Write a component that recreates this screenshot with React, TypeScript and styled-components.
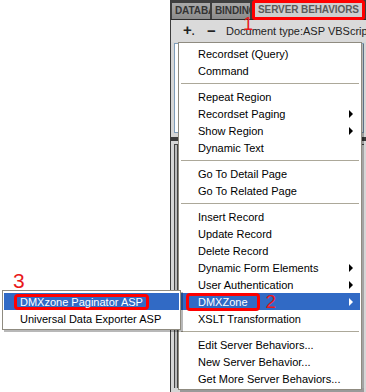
import styled, { createGlobalStyle } from "styled-components";

const GlobalStyle = createGlobalStyle`
  html, body { margin: 0; padding: 0; background: #fff; }
  body { font-family: "Liberation Sans", Arial, sans-serif; font-size: 11px; }
`;

type Item = { label: string; sub?: boolean; sep?: boolean; active?: boolean };

const items: Item[] = [
  { label: "Recordset (Query)" },
  { label: "Command" },
  { label: "", sep: true },
  { label: "Repeat Region" },
  { label: "Recordset Paging", sub: true },
  { label: "Show Region", sub: true },
  { label: "Dynamic Text" },
  { label: "", sep: true },
  { label: "Go To Detail Page" },
  { label: "Go To Related Page" },
  { label: "", sep: true },
  { label: "Insert Record" },
  { label: "Update Record" },
  { label: "Delete Record" },
  { label: "Dynamic Form Elements", sub: true },
  { label: "User Authentication", sub: true },
  { label: "DMXZone", sub: true, active: true },
  { label: "XSLT Transformation" },
  { label: "", sep: true },
  { label: "Edit Server Behaviors..." },
  { label: "New Server Behavior..." },
  { label: "Get More Server Behaviors..." },
];

const App = () => (
  <>
    <GlobalStyle />
    <Stage>
      <Blank />
      <Panel>
        <TabBar>
          <Tab $width={38}>DATABASES</Tab>
          <Tab $width={38}>BINDINGS</Tab>
          <Tab $width={113} $current>
            SERVER BEHAVIORS
          </Tab>
        </TabBar>
        <Toolbar>
          <ToolIcon $width={24}>
            +<small>.</small>
          </ToolIcon>
          <ToolIcon $width={19}>−</ToolIcon>
          <DocType>Document type:ASP VBScript</DocType>
        </Toolbar>
        <Body>
          <ListBox />
          <Divider />
          <Props>
            <PropField />
          </Props>
        </Body>
      </Panel>

      <Note $left={243} $top={15} $size={18}>
        1
      </Note>

      <Menu>
        {items.map((it, i) =>
          it.sep ? (
            <Separator key={i} />
          ) : (
            <Row key={i} $active={it.active}>
              {it.active ? (
                <>
                  <Mark>{it.label}</Mark>
                  <InlineNote>2</InlineNote>
                </>
              ) : (
                <span>{it.label}</span>
              )}
              {it.sub && <Arrow $active={it.active} />}
            </Row>
          )
        )}
      </Menu>

      <SubMenu>
        <Note $left={10} $top={-21} $size={21}>
          3
        </Note>
        <SubRow $active>
          <SubMark>DMXzone Paginator ASP</SubMark>
        </SubRow>
        <SubRow>Universal Data Exporter ASP</SubRow>
      </SubMenu>
    </Stage>
  </>
);

export default App;

const Stage = styled.div`
  position: relative;
  width: 366px;
  height: 392px;
  overflow: hidden;
  display: flex;
  background: #fff;
`;

const Blank = styled.div`
  width: 170px;
  flex: none;
`;

const Panel = styled.div`
  flex: 1;
  display: flex;
  flex-direction: column;
  min-width: 0;
  background: #d6d6d6;
  border-left: 1px solid #3c3c3c;
`;

const TabBar = styled.div`
  height: 19px;
  flex: none;
  display: flex;
  align-items: flex-end;
  gap: 2px;
  padding-left: 1px;
  background: #3e3e3e;
  border-bottom: 1px solid #2a2a2a;
`;

const Tab = styled.div<{ $width: number; $current?: boolean }>`
  width: ${(p) => p.$width}px;
  height: 16px;
  flex: none;
  box-sizing: border-box;
  overflow: hidden;
  white-space: nowrap;
  padding-left: 3px;
  font-weight: bold;
  font-size: 10px;
  letter-spacing: -0.1px;
  line-height: 16px;
  color: ${(p) => (p.$current ? "#5a5a5a" : "#333")};
  background: ${(p) =>
    p.$current ? "#cfcfcf" : "linear-gradient(#a9a9a9, #8a8a8a)"};
  ${(p) =>
    p.$current &&
    `
    height: 20px;
    line-height: 14px;
    border: 3px solid #f00;
    border-radius: 3px;
    margin-bottom: -1px;
  `}
`;

const Toolbar = styled.div`
  height: 22px;
  flex: none;
  display: flex;
  align-items: center;
  padding-left: 12px;
  background: #dadada;
`;

const ToolIcon = styled.span<{ $width: number }>`
  width: ${(p) => p.$width}px;
  flex: none;
  font-weight: bold;
  font-size: 15px;
  color: #222;
  line-height: 14px;
  small {
    font-size: 10px;
  }
`;

const DocType = styled.span`
  white-space: nowrap;
  color: #222;
`;

const Body = styled.div`
  flex: 1;
  display: flex;
  flex-direction: column;
  padding: 1px 2px 0 2px;
`;

const ListBox = styled.div`
  height: 88px;
  margin-left: 1px;
  background: #fff;
  border: 1px solid #7f9db9;
`;

const Divider = styled.div`
  height: 4px;
  margin: 4px -2px 2px -2px;
  background: #3a3a3a;
`;

const Props = styled.div`
  flex: 1;
  display: flex;
  padding: 1px 0 4px 1px;
`;

const PropField = styled.div`
  flex: 1;
  border-left: 1px solid #444;
  border-top: 1px solid #444;
  box-shadow: inset 2px 0 0 #bbb, inset 3px 0 0 #444;
  background: #e4e4e4;
`;

const Note = styled.div<{ $left: number; $top: number; $size: number }>`
  position: absolute;
  left: ${(p) => p.$left}px;
  top: ${(p) => p.$top}px;
  font-size: ${(p) => p.$size}px;
  line-height: 1;
  color: #e8191b;
`;

const Menu = styled.div`
  position: absolute;
  left: 178px;
  top: 42px;
  width: 184px;
  box-sizing: border-box;
  padding: 2px 1px;
  background: #fff;
  border: 1px solid #8f8b80;
  box-shadow: 2px 2px 0 rgba(0, 0, 0, 0.28);
`;

const Row = styled.div<{ $active?: boolean }>`
  height: 17px;
  display: flex;
  align-items: center;
  padding: 0 7px 0 18px;
  white-space: nowrap;
  color: ${(p) => (p.$active ? "#fff" : "#000")};
  background: ${(p) => (p.$active ? "#316ac5" : "transparent")};
  span:first-child {
    flex: 1;
  }
`;

const Mark = styled.span`
  flex: none !important;
  height: 18px;
  box-sizing: border-box;
  margin-left: -12px;
  padding: 0 9px;
  line-height: 12px;
  border: 3px solid #f00;
  border-radius: 4px;
`;

const InlineNote = styled.span`
  flex: 1;
  margin-left: 6px;
  font-size: 19px;
  line-height: 17px;
  color: #e8191b;
`;

const Arrow = styled.i<{ $active?: boolean }>`
  width: 0;
  height: 0;
  border-left: 4px solid ${(p) => (p.$active ? "#fff" : "#000")};
  border-top: 4px solid transparent;
  border-bottom: 4px solid transparent;
`;

const Separator = styled.div`
  height: 9px;
  display: flex;
  align-items: center;
  padding: 0 1px;
  &::after {
    content: "";
    flex: 1;
    height: 1px;
    background: #aca899;
  }
`;

const SubMenu = styled.div`
  position: absolute;
  left: 2px;
  top: 290px;
  width: 179px;
  box-sizing: border-box;
  padding: 2px 1px;
  background: #fff;
  border: 1px solid #8f8b80;
  box-shadow: 2px 2px 0 rgba(0, 0, 0, 0.28);
`;

const SubRow = styled.div<{ $active?: boolean }>`
  height: 17px;
  display: flex;
  align-items: center;
  padding-left: 16px;
  white-space: nowrap;
  color: ${(p) => (p.$active ? "#fff" : "#000")};
  background: ${(p) => (p.$active ? "#316ac5" : "transparent")};
`;

const SubMark = styled.span`
  height: 16px;
  box-sizing: border-box;
  margin-left: -6px;
  padding: 0 3px;
  line-height: 10px;
  border: 3px solid #f00;
  border-radius: 4px;
`;
